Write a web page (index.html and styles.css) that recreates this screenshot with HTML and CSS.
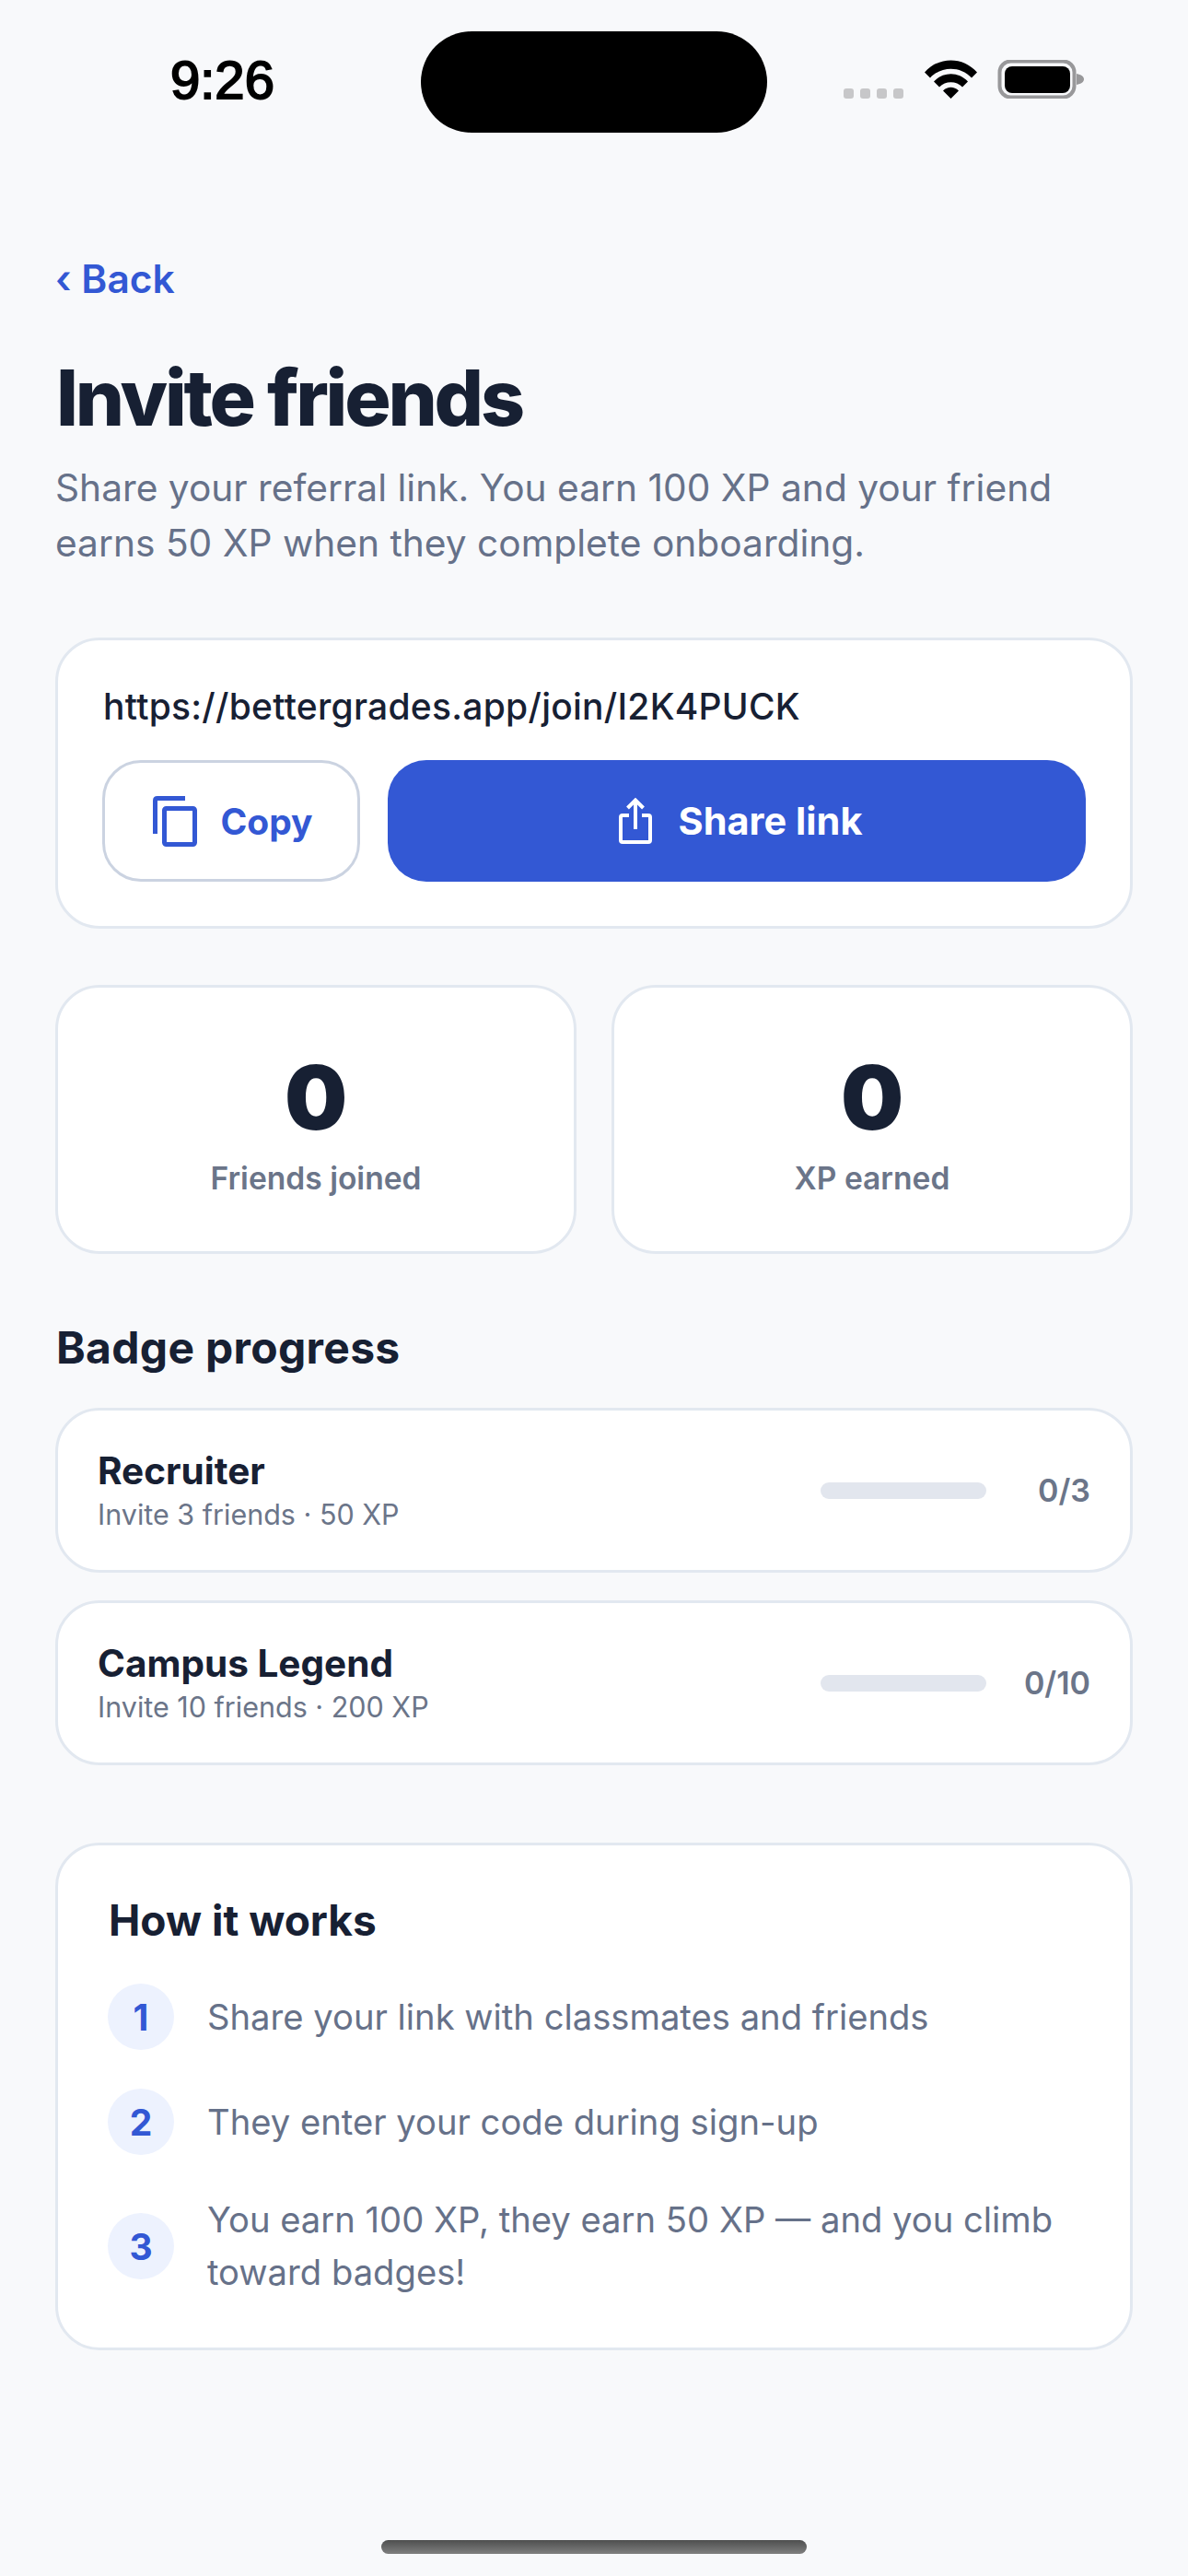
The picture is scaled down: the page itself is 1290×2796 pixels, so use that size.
FILE: index.html
```html
<!DOCTYPE html>
<html lang="en">
<head>
    <meta charset="UTF-8">
    <meta name="viewport" content="width=device-width, initial-scale=1.0">
    <title>Invite friends</title>
    <link rel="stylesheet" href="styles.css">
</head>
<body>
    <div class="status-bar">
        <span class="status-time">9:26</span>
        <div class="status-pill"></div>
        <svg class="status-icons" width="261" height="42" viewBox="0 0 261 42">
            <g fill="#c7c7c9">
                <rect x="0" y="31" width="11" height="11" rx="3"/>
                <rect x="18" y="31" width="11" height="11" rx="3"/>
                <rect x="36" y="31" width="11" height="11" rx="3"/>
                <rect x="54" y="31" width="11" height="11" rx="3"/>
            </g>
            <path fill="#000" d="M88 13.500C103 -4 130 -4 145 13.500L139 19.500C127 6.500 106 6.500 94 19.500ZM98 23.500C108 12.500 125 12.500 135 23.500L129 29.500C122.500 22.500 110.500 22.500 104 29.500ZM108 33.500C113 28.500 120 28.500 125 33.500L116.500 42Z"/>
            <rect x="169.500" y="1.500" width="81" height="39" rx="12" fill="none" stroke="#98989a" stroke-width="4"/>
            <rect x="175" y="7" width="71" height="29" rx="8" fill="#000"/>
            <path fill="#98989a" d="M253 15C258 16 261 18 261 21C261 24 258 26 253 27Z"/>
        </svg>
    </div>

    <main class="page">
        <a class="back-link">‹ Back</a>
        <h1>Invite friends</h1>
        <p class="subtitle">Share your referral link. You earn 100 XP and your friend earns 50 XP when they complete onboarding.</p>

        <section class="card link-card">
            <div class="link-url">https://bettergrades.app/join/I2K4PUCK</div>
            <div class="link-actions">
                <button class="btn btn-copy">
                    <svg width="48" height="55" viewBox="0 0 48 55" fill="none" stroke="#3358d4" stroke-width="5">
                        <path d="M35 2.500H5C3.500 2.500 2.500 3.500 2.500 5V41"/>
                        <rect x="12.500" y="13.500" width="33" height="39" rx="2"/>
                    </svg>
                    Copy
                </button>
                <button class="btn btn-share">
                    <svg width="36" height="50" viewBox="0 0 36 50" fill="none" stroke="#fff" stroke-width="4">
                        <path d="M11 19H4C2.800 19 2 19.800 2 21V46C2 47.200 2.800 48 4 48H32C33.200 48 34 47.200 34 46V21C34 19.800 33.200 19 32 19H25"/>
                        <path d="M18 34V3M9.500 11L18 2.500L26.500 11"/>
                    </svg>
                    Share link
                </button>
            </div>
        </section>

        <section class="stats">
            <div class="card stat-card">
                <div class="stat-value">0</div>
                <div class="stat-label">Friends joined</div>
            </div>
            <div class="card stat-card">
                <div class="stat-value">0</div>
                <div class="stat-label">XP earned</div>
            </div>
        </section>

        <h2 class="section-title">Badge progress</h2>
        <div class="badge-list">
            <div class="card badge-row">
                <div class="badge-info">
                    <div class="badge-name">Recruiter</div>
                    <div class="badge-desc">Invite 3 friends · 50 XP</div>
                </div>
                <div class="badge-bar"></div>
                <div class="badge-count">0/3</div>
            </div>
            <div class="card badge-row">
                <div class="badge-info">
                    <div class="badge-name">Campus Legend</div>
                    <div class="badge-desc">Invite 10 friends · 200 XP</div>
                </div>
                <div class="badge-bar"></div>
                <div class="badge-count">0/10</div>
            </div>
        </div>

        <section class="card how-card">
            <h2 class="how-title">How it works</h2>
            <div class="how-steps">
                <div class="how-step">
                    <span class="step-num">1</span>
                    <span class="step-text">Share your link with classmates and friends</span>
                </div>
                <div class="how-step">
                    <span class="step-num">2</span>
                    <span class="step-text">They enter your code during sign-up</span>
                </div>
                <div class="how-step">
                    <span class="step-num">3</span>
                    <span class="step-text">You earn 100 XP, they earn 50 XP — and you climb toward badges!</span>
                </div>
            </div>
        </section>
    </main>

    <div class="home-bar"></div>
</body>
</html>
```

FILE: styles.css
```css
* {
    box-sizing: border-box;
}

body {
    font-family: 'Inter', sans-serif;
    margin: 0;
    padding: 0;
    width: 1290px;
    height: 2796px;
    overflow: hidden;
    position: relative;
    background: #f8f9fb;
    color: #172033;
}

.status-bar {
    height: 144px;
    padding-top: 34px;
    display: flex;
    align-items: flex-start;
}

.status-time {
    font-family: 'Liberation Sans', sans-serif;
    font-weight: 400;
    -webkit-text-stroke: 2px #000;
    font-size: 58px;
    line-height: 66px;
    width: 272px;
    margin-top: 20px;
    padding-left: 185px;
    color: #000;
}

.status-pill {
    width: 376px;
    height: 110px;
    margin-left: 185px;
    background: #000;
    border-radius: 55px;
}

.status-icons {
    margin-left: 83px;
    margin-top: 31px;
}

.page {
    padding: 0 60px;
}

.back-link {
    display: block;
    margin-top: 132px;
    font-size: 42.5px;
    font-weight: 600;
    line-height: 54px;
    color: #3358d4;
}

h1 {
    margin: 51px 0 0 1px;
    font-size: 84px;
    font-weight: 800;
    line-height: 102px;
    letter-spacing: -3.2px;
}

.subtitle {
    margin: 17px 0 0;
    font-size: 40.7px;
    line-height: 60px;
    color: #667189;
}

.card {
    background: #fff;
    border: 3px solid #e2e8f0;
    border-radius: 48px;
}

.link-card {
    margin-top: 72px;
    padding: 48px;
    height: 316px;
}

.link-url {
    margin-left: 1px;
    font-size: 39px;
    font-weight: 500;
    line-height: 48px;
    letter-spacing: 0.25px;
}

.link-actions {
    display: flex;
    gap: 30px;
    margin-top: 34px;
}

.btn {
    height: 132px;
    border-radius: 42px;
    font-family: 'Inter', sans-serif;
    font-size: 39px;
    font-weight: 650;
    display: flex;
    align-items: center;
    justify-content: center;
    gap: 25px;
    padding: 0;
}

.btn-copy {
    width: 280px;
    padding-left: 4px;
    background: #fff;
    color: #3358d4;
    border: 3px solid #cbd3e1;
}

.btn-share {
    flex: 1;
    padding-left: 8px;
    background: #3358d4;
    color: #fff;
    border: none;
    font-size: 41.5px;
    gap: 29px;
}

.stats {
    display: flex;
    gap: 38px;
    margin-top: 61px;
}

.stat-card {
    flex: 1;
    height: 292px;
    text-align: center;
    padding-top: 62px;
}

.stat-value {
    font-size: 96px;
    font-weight: 900;
    line-height: 114px;
}

.stat-label {
    margin-top: 10px;
    font-size: 33.6px;
    font-weight: 600;
    line-height: 42px;
    color: #6b7589;
}

.section-title {
    margin: 75px 0 0 1px;
    font-size: 48px;
    font-weight: 750;
    line-height: 54px;
    letter-spacing: 0.3px;
}

.badge-list {
    display: flex;
    flex-direction: column;
    gap: 30px;
    margin-top: 38px;
}

.badge-row {
    display: flex;
    align-items: center;
    height: 179px;
    padding: 0 43px;
}

.badge-info {
    flex: 1;
    margin-top: 4px;
}

.badge-name {
    font-size: 40.5px;
    font-weight: 750;
    line-height: 48px;
}

.badge-desc {
    font-size: 30.5px;
    line-height: 45px;
    color: #6b7589;
}

.badge-bar {
    width: 180px;
    height: 18px;
    border-radius: 9px;
    background: #e2e6ee;
}

.badge-count {
    width: 113px;
    text-align: right;
    font-size: 34px;
    font-weight: 600;
    color: #6b7589;
}

.how-card {
    margin-top: 84px;
    height: 551px;
    padding: 54px 54px 0;
}

.how-title {
    margin: 0 0 0 1px;
    font-size: 46px;
    font-weight: 750;
    line-height: 54px;
}

.how-steps {
    display: flex;
    flex-direction: column;
    gap: 42px;
    margin-top: 42px;
}

.how-step {
    display: flex;
    align-items: center;
    gap: 36px;
}

.step-num {
    flex: none;
    width: 72px;
    height: 72px;
    border-radius: 50%;
    background: #edf2fe;
    color: #3358d4;
    font-size: 39px;
    font-weight: 750;
    display: flex;
    align-items: center;
    justify-content: center;
}

.step-text {
    font-size: 38.2px;
    line-height: 57px;
    color: #667189;
}

.home-bar {
    position: absolute;
    left: 414px;
    top: 2757px;
    width: 462px;
    height: 15px;
    border-radius: 8px;
    background: linear-gradient(180deg, #4e4f4f, #7f7f7f);
}
```
